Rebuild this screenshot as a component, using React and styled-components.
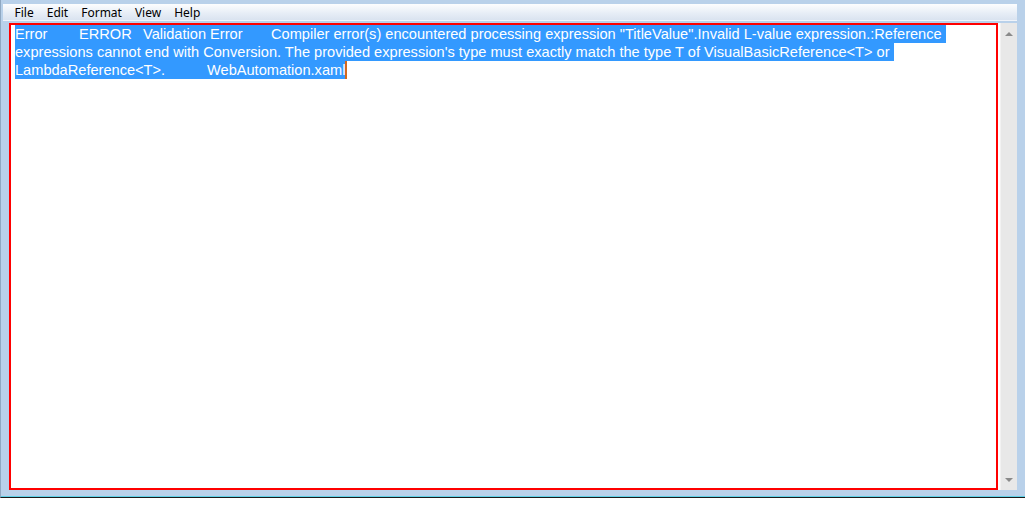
import styled, { createGlobalStyle } from 'styled-components'

const Global = createGlobalStyle`
	html, body{
		margin: 0;
		padding: 0;
		background: #FFFFFF;
	}
`

const menus = ['File', 'Edit', 'Format', 'View', 'Help']

const lines = [
	'Error\tERROR\tValidation Error\tCompiler error(s) encountered processing expression "TitleValue".Invalid L-value expression.:Reference ',
	"expressions cannot end with Conversion. The provided expression's type must exactly match the type T of VisualBasicReference<T> or ",
	'LambdaReference<T>.\tWebAutomation.xaml'
]

export default function App(){
	return(<>
		<Global/>
		<Janela>
			<Menu>
				{menus.map((m, i)=>
					<Item key={i}>{m}</Item>
				)}
			</Menu>
			<Corpo>
				<Editor>
					{lines.map((l, i)=>
						<Linha key={i}>
							<Sel>{l}</Sel>
							{i === lines.length - 1 && <Caret/>}
						</Linha>
					)}
				</Editor>
				<Faixa/>
				<Scroll>
					<Seta/>
					<Seta $down/>
				</Scroll>
			</Corpo>
		</Janela>
	</>)
}

const Janela = styled.div`
	width: 1025px;
	height: 498px;
	box-sizing: border-box;
	background: #B9D1EA;
	border-left: 1px solid #8FA8C2;
	border-bottom: 1px solid #1A1A1A;
	box-shadow: inset 0 -1px 0 #5ED0E6;
	padding: 4px 8px 7px 2px;
	display: flex;
	flex-direction: column;
`

const Menu = styled.div`
	height: 17px;
	display: flex;
	align-items: center;
	padding-left: 5px;
	padding-top: 1px;
	box-sizing: border-box;
	background: linear-gradient(#FCFDFE, #E6EDF6 60%, #DAE3F0);
	border-bottom: 1px solid #F0F4FA;
	margin-bottom: 2px;
`

const Item = styled.div`
	font-family: "Noto Sans", "Liberation Sans", sans-serif;
	font-size: 12px;
	color: #000000;
	padding: 0 6.5px;
	line-height: 16px;
`

const Corpo = styled.div`
	flex: 1;
	display: flex;
	padding-left: 6px;
`

const Editor = styled.div`
	flex: 1;
	background: #FFFFFF;
	border: 2px solid #FF0000;
	padding: 0 4px;
	font-family: "Liberation Sans", Arial, sans-serif;
	font-size: 14.6px;
	line-height: 18px;
	color: #FFFFFF;
	tab-size: 64px;
	white-space: pre;
	overflow: hidden;
`

const Linha = styled.div`
	height: 17px;
	margin-bottom: 1px;
	display: flex;
	align-items: stretch;
`

const Sel = styled.span`
	background: #3399FF;
	display: inline-block;
	height: 18px;
`

const Caret = styled.span`
	width: 2px;
	height: 18px;
	background: #D2691E;
`

const Faixa = styled.div`
	width: 2px;
	background: #FFFFFF;
`

const Scroll = styled.div`
	width: 16px;
	background: #E8E8E8;
	border-left: 1px solid #F2F2F2;
	display: flex;
	flex-direction: column;
	justify-content: space-between;
	align-items: center;
	padding: 9px 0 8px;
`

const Seta = styled.div`
	width: 0;
	height: 0;
	border-left: 4px solid transparent;
	border-right: 4px solid transparent;
	${p => p.$down
		? 'border-top: 4px solid #8A8A8A;'
		: 'border-bottom: 4px solid #8A8A8A;'}
`
